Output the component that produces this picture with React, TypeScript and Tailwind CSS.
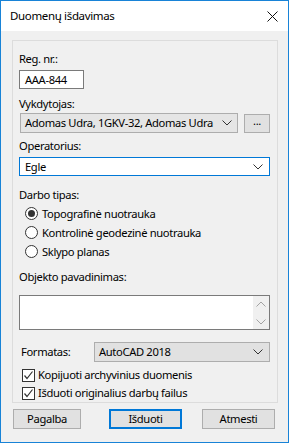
import React from "react";

const Chevron = ({ color = "#333" }: { color?: string }) => (
  <svg width="10" height="6" viewBox="0 0 10 6" className="block shrink-0">
    <path d="M0.5 0.5 L5 5 L9.5 0.5" fill="none" stroke={color} strokeWidth="1" />
  </svg>
);

const ChevronUp = ({ color = "#a3a3a3" }: { color?: string }) => (
  <svg width="10" height="6" viewBox="0 0 10 6" className="block shrink-0">
    <path d="M0.5 5.5 L5 1 L9.5 5.5" fill="none" stroke={color} strokeWidth="1" />
  </svg>
);

const Radio = ({ checked, label }: { checked?: boolean; label: string }) => (
  <div className="flex h-[19px] items-center">
    <div className="ml-[6px] flex h-[13px] w-[13px] items-center justify-center rounded-full border border-[#333] bg-white">
      {checked && <div className="h-[7px] w-[7px] rounded-full bg-[#333]" />}
    </div>
    <span className="ml-[4px]">{label}</span>
  </div>
);

const Check = ({ label }: { label: string }) => (
  <div className="flex h-[18px] items-center">
    <div className="ml-[3px] flex h-[13px] w-[13px] items-center justify-center border border-[#333] bg-white">
      <svg width="11" height="11" viewBox="0 0 11 11" className="block">
        <path d="M1.5 5.5 L4 8.5 L9.5 1.5" fill="none" stroke="#333" strokeWidth="1.2" />
      </svg>
    </div>
    <span className="ml-[3px]">{label}</span>
  </div>
);

export default function App() {
  return (
    <div
      className="flex h-[443px] w-[289px] flex-col whitespace-nowrap border border-[#1883d7] bg-[#f0f0f0] text-[11.2px] leading-[16px] tracking-[-0.35px] text-black"
      style={{ fontFamily: '"Noto Sans", "Open Sans", sans-serif' }}
    >
      {/* Title bar */}
      <div className="flex h-[30px] shrink-0 items-center justify-between bg-white pl-[9px] pr-[10px]">
        <span className="text-[11.5px]">Duomenų išdavimas</span>
        <svg width="11" height="11" viewBox="0 0 11 11" className="block">
          <path d="M0.5 0.5 L10.5 10.5 M10.5 0.5 L0.5 10.5" stroke="#111" strokeWidth="1" />
        </svg>
      </div>

      {/* Panel */}
      <div className="ml-[11px] mr-[10px] mt-[9px] flex h-[363px] flex-col border border-[#dcdcdc] px-[6px]">
        <div className="mt-[10px]">Reg. nr.:</div>
        <div className="mt-[3px] flex h-[20px] w-[65px] items-center border border-[#7a7a7a] bg-white pl-[5px]">
          AAA-844
        </div>

        <div className="mt-[7px]">Vykdytojas:</div>
        <div className="mt-[1px] flex items-center">
          <div className="ml-[1px] flex h-[20px] w-[218px] items-center justify-between border border-[#adadad] bg-[#e5e5e5] pl-[4px] pr-[5px]">
            <span>Adomas Udra, 1GKV-32, Adomas Udra</span>
            <Chevron />
          </div>
          <div className="ml-[6px] flex h-[19px] w-[26px] items-center justify-center border border-[#adadad] bg-[#e1e1e1] pb-[4px]">
            ...
          </div>
        </div>

        <div className="mt-[5px]">Operatorius:</div>
        <div className="mt-[3px] flex h-[20px] w-[251px] items-center justify-between border border-[#0078d7] bg-white pl-[5px] pr-[6px]">
          <span>Egle</span>
          <Chevron />
        </div>

        <div className="mt-[11px]">Darbo tipas:</div>
        <div className="mt-[1px] flex flex-col">
          <Radio checked label="Topografinė nuotrauka" />
          <Radio label="Kontrolinė geodezinė nuotrauka" />
          <Radio label="Sklypo planas" />
        </div>

        <div className="mt-[8px]">Objekto pavadinimas:</div>
        <div className="mt-[10px] flex h-[36px] w-[251px] border border-[#7a7a7a] bg-white">
          <div className="flex-1" />
          <div className="flex w-[16px] flex-col items-center justify-between bg-[#f0f0f0] pb-[4px] pt-[5px]">
            <ChevronUp />
            <Chevron color="#a3a3a3" />
          </div>
        </div>

        <div className="mt-[12px] flex items-center">
          <span className="ml-[2px] w-[73px]">Formatas:</span>
          <div className="flex h-[20px] w-[176px] items-center justify-between border border-[#adadad] bg-[#e1e1e1] pl-[4px] pr-[6px]">
            <span>AutoCAD 2018</span>
            <Chevron />
          </div>
        </div>

        <div className="mt-[4px] flex flex-col">
          <Check label="Kopijuoti archyvinius duomenis" />
          <Check label="Išduoti originalius darbų failus" />
        </div>
      </div>

      {/* Buttons */}
      <div className="mt-[6px] flex items-center">
        <div className="ml-[12px] flex h-[20px] w-[68px] items-center justify-center border border-[#adadad] bg-[#e1e1e1]">
          Pagalba
        </div>
        <div className="ml-[28px] flex h-[20px] w-[73px] items-center justify-center border-2 border-[#0078d7] bg-[#e1e1e1]">
          Išduoti
        </div>
        <div className="ml-[20px] flex h-[20px] w-[73px] items-center justify-center border border-[#adadad] bg-[#e1e1e1]">
          Atmesti
        </div>
      </div>
    </div>
  );
}
